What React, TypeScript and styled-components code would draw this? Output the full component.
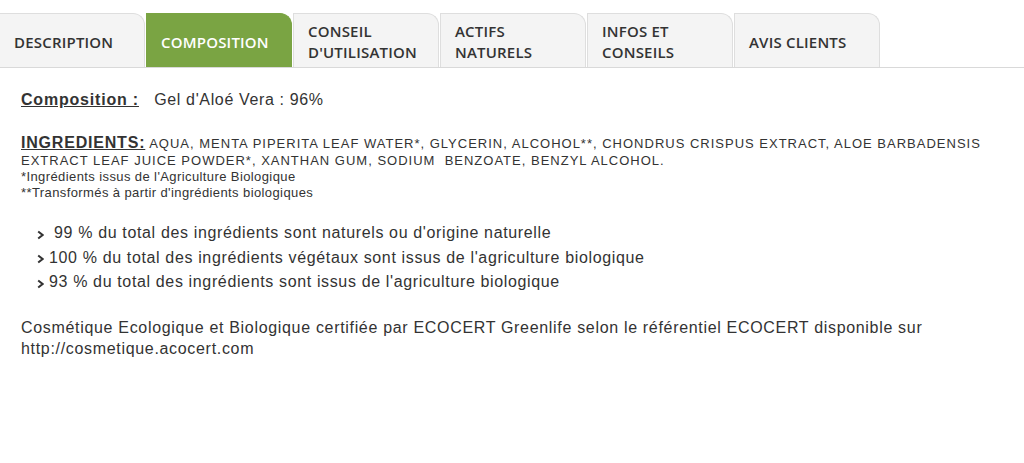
import * as React from 'react';
import styled, { createGlobalStyle } from 'styled-components';

const GlobalStyle = createGlobalStyle`
	html, body {
		margin: 0;
		padding: 0;
		background: #fff;
	}
	body {
		font-family: 'Liberation Sans', Arial, sans-serif;
		color: #333;
	}
`;

const Page = styled.div`
	width: 1024px;
	padding-top: 13px;
`;

const TabList = styled.ul`
	display: flex;
	gap: 1px;
	list-style: none;
	margin: 0 0 0 -1px;
	padding: 0;
	border-bottom: 1px solid #d9d9d9;
`;

const Tab = styled.li<{ $active?: boolean }>`
	box-sizing: border-box;
	width: 146px;
	height: 54px;
	display: flex;
	align-items: center;
	padding: 3px 10px 0 14px;
	border: 1px solid ${(p) => (p.$active ? '#7aa443' : '#dedede')};
	border-bottom: none;
	border-top-right-radius: 12px;
	background: ${(p) => (p.$active ? '#7aa443' : '#f4f4f4')};
	color: ${(p) => (p.$active ? '#fff' : '#333')};
	font-family: 'Open Sans', sans-serif;
	font-weight: 600;
	font-size: 15px;
	letter-spacing: 0.2px;
	line-height: 21px;
	text-transform: uppercase;
	cursor: pointer;
`;

const Content = styled.div`
	padding: 22px 21px;
	letter-spacing: 0.04em;
`;

const Label = styled.span`
	font-weight: bold;
	text-decoration: underline;
	letter-spacing: 0.05em;
`;

const CompositionLine = styled.p`
	margin: 0 0 24px;
	font-size: 16px;
	line-height: 20px;
`;

const Ingredients = styled.p`
	margin: 0;
	font-size: 13px;
	line-height: 17px;
	letter-spacing: 1px;
	& > ${Label} {
		font-size: 16px;
		line-height: 17px;
		letter-spacing: 0.8px;
	}
`;

const Note = styled.p`
	margin: 0;
	font-size: 13px;
	line-height: 16px;
	letter-spacing: 0.4px;
`;

const Facts = styled.ul`
	list-style: none;
	margin: 20px 0 0;
	padding: 0 0 0 16px;
`;

const Fact = styled.li`
	display: flex;
	align-items: center;
	gap: 5px;
	font-size: 16px;
	line-height: 24.5px;
`;

const Chevron = styled.svg`
	width: 7px;
	height: 10px;
	margin-top: 3px;
	flex: none;
`;

const Certification = styled.p`
	margin: 22px 0 0;
	font-size: 16px;
	line-height: 21px;
	letter-spacing: 0.68px;
`;

const tabs = [
	'Description',
	'Composition',
	"Conseil d'utilisation",
	'Actifs naturels',
	'Infos et conseils',
	'Avis clients',
];

const facts = [
	"\u00a099 % du total des ingrédients sont naturels ou d'origine naturelle",
	"100 % du total des ingrédients végétaux sont issus de l'agriculture biologique",
	"93 % du total des ingrédients sont issus de l'agriculture biologique",
];

export default function App() {
	return (
		<Page>
			<GlobalStyle />
			<TabList>
				{tabs.map((t) => (
					<Tab key={t} $active={t === 'Composition'}>
						{t}
					</Tab>
				))}
			</TabList>
			<Content>
				<CompositionLine>
					<Label>Composition :</Label>&nbsp;&nbsp; Gel d'Aloé Vera : 96%
				</CompositionLine>
				<Ingredients>
					<Label>INGREDIENTS:</Label> AQUA, MENTA PIPERITA LEAF WATER*, GLYCERIN,
					ALCOHOL**, CHONDRUS CRISPUS EXTRACT, ALOE BARBADENSIS EXTRACT LEAF JUICE
					POWDER*, XANTHAN GUM, SODIUM&nbsp; BENZOATE, BENZYL ALCOHOL.
				</Ingredients>
				<Note>*Ingrédients issus de l'Agriculture Biologique</Note>
				<Note>**Transformés à partir d'ingrédients biologiques</Note>
				<Facts>
					{facts.map((f) => (
						<Fact key={f}>
							<Chevron viewBox="0 0 7 10">
								<polyline points="1.2,1.5 5.6,5 1.2,8.5" fill="none" stroke="#333" strokeWidth="2" />
							</Chevron>
							<span>{f}</span>
						</Fact>
					))}
				</Facts>
				<Certification>
					Cosmétique Ecologique et Biologique certifiée par ECOCERT Greenlife selon le
					référentiel ECOCERT disponible sur http://cosmetique.acocert.com
				</Certification>
			</Content>
		</Page>
	);
}
